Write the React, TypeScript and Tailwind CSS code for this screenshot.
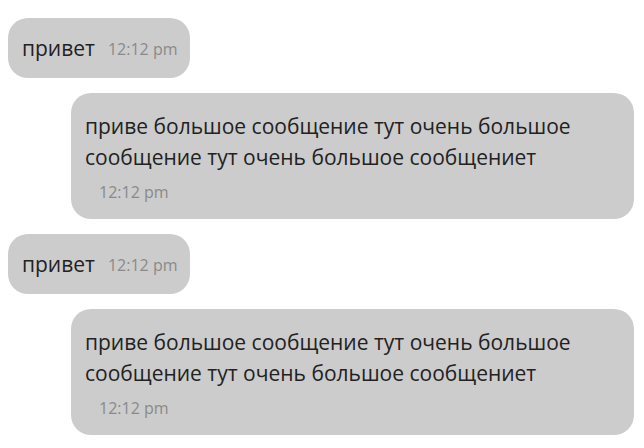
const messages = [
  { id: 1, own: false, text: "привет", time: "12:12 pm" },
  {
    id: 2,
    own: true,
    text: "приве большое сообщение тут очень большое сообщение тут очень большое сообщениет",
    time: "12:12 pm"
  },
  { id: 3, own: false, text: "привет", time: "12:12 pm" },
  {
    id: 4,
    own: true,
    text: "приве большое сообщение тут очень большое сообщение тут очень большое сообщениет",
    time: "12:12 pm"
  }
];

const ShortBubble = ({ text, time }: { text: string; time: string }) => (
  <div className="flex h-[60px] items-center gap-[13px] self-start rounded-[20px] bg-[#cccccc] pl-[14px] pr-[12px] pt-[1px]">
    <span className="text-[21px] text-[#222]">{text}</span>
    <span className="text-[16px] text-[#8a8a8a]">{time}</span>
  </div>
);

const LongBubble = ({ text, time }: { text: string; time: string }) => (
  <div className="h-[126px] w-[563px] self-end rounded-[20px] bg-[#cccccc] pl-[14px] pr-[30px] pt-[18px]">
    <p className="text-[21px] leading-[31px] text-[#222]">{text}</p>
    <p className="mt-[8px] pl-[14px] text-[16px] leading-[22px] text-[#8a8a8a]">{time}</p>
  </div>
);

export default function App() {
  return (
    <div
      className="flex h-[448px] flex-col gap-[15px] overflow-hidden bg-white pl-2 pr-[10px] pt-[18px]"
      style={{ fontFamily: '"Open Sans", sans-serif' }}
    >
      {messages.map((message) =>
        message.own ? (
          <LongBubble key={message.id} text={message.text} time={message.time} />
        ) : (
          <ShortBubble key={message.id} text={message.text} time={message.time} />
        )
      )}
    </div>
  );
}
